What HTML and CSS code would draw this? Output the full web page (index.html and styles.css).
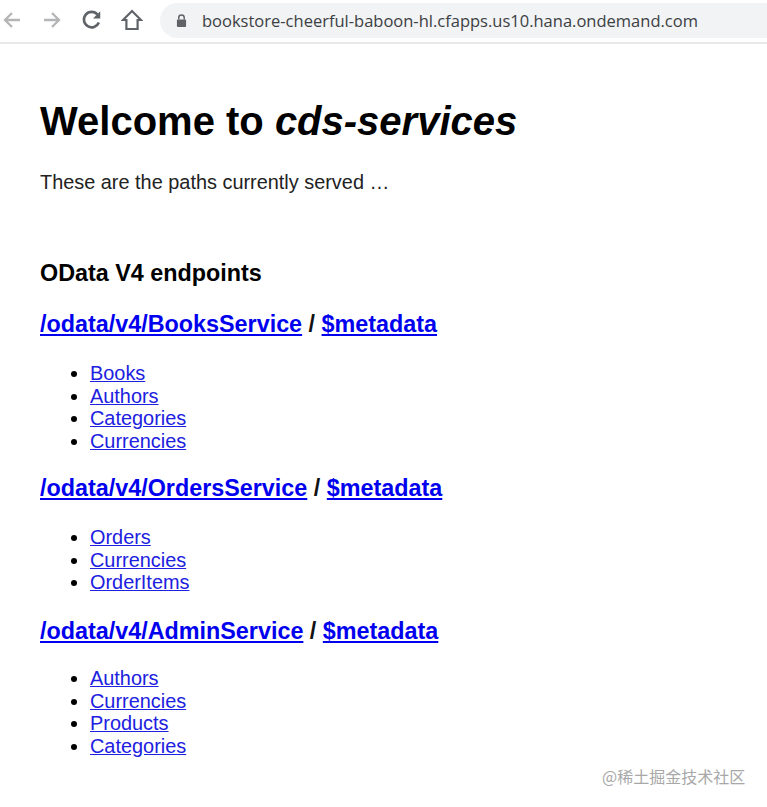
FILE: index.html
```html
<!DOCTYPE html>
<html lang="en">
<head>
<meta charset="utf-8">
<title>Welcome to cds-services</title>
<link rel="stylesheet" href="styles.css">
</head>
<body>
<header class="toolbar">
  <svg class="icon back" viewBox="0 0 20 20"><path d="M18 10H3M10 3l-7 7 7 7"/></svg>
  <svg class="icon forward" viewBox="0 0 20 20"><path d="M2 10h15M10 3l7 7-7 7"/></svg>
  <svg class="icon reload" viewBox="0 0 20 20"><path d="M16.2 12.2A7 7 0 1 1 15 5.1"/><path class="solid" d="M17.5 2v6.6h-6.6z"/></svg>
  <svg class="icon home" viewBox="0 0 22 22"><path d="M11 2 2 11h3.4v9h11.200v-9H20z"/></svg>
  <div class="omnibox">
    <svg class="lock" viewBox="0 0 12 14"><path d="M3 6V4a3 3 0 0 1 6 0v2" class="shackle"/><rect x="1" y="6" width="10" height="8" rx="1"/></svg>
    <span class="url">bookstore-cheerful-baboon-hl.cfapps.us10.hana.ondemand.com</span>
  </div>
</header>
<main class="page">
  <h1>Welcome to <em>cds-services</em></h1>
  <p class="intro">These are the paths currently served …</p>
  <h2>OData V4 endpoints</h2>
  <h3><a href="#">/odata/v4/BooksService</a> / <a href="#">$metadata</a></h3>
  <ul>
    <li><a href="#">Books</a></li>
    <li><a href="#">Authors</a></li>
    <li><a href="#">Categories</a></li>
    <li><a href="#">Currencies</a></li>
  </ul>
  <h3><a href="#">/odata/v4/OrdersService</a> / <a href="#">$metadata</a></h3>
  <ul>
    <li><a href="#">Orders</a></li>
    <li><a href="#">Currencies</a></li>
    <li><a href="#">OrderItems</a></li>
  </ul>
  <h3 class="admin"><a href="#">/odata/v4/AdminService</a> / <a href="#">$metadata</a></h3>
  <ul class="admin-list">
    <li><a href="#">Authors</a></li>
    <li><a href="#">Currencies</a></li>
    <li><a href="#">Products</a></li>
    <li><a href="#">Categories</a></li>
  </ul>
</main>
<div class="watermark">@稀土掘金技术社区</div>
</body>
</html>
```
FILE: styles.css
```css
html, body { margin: 0; padding: 0; background: #fff; }
body {
  position: relative;
  width: 767px;
  height: 807px;
  overflow: hidden;
  font-family: "Liberation Sans", Arial, sans-serif;
  font-size: 19.900px;
  color: #222;
}
.toolbar {
  display: flex;
  align-items: center;
  height: 40px;
  padding-bottom: 2px;
  border-bottom: 2px solid #e8e9eb;
  box-sizing: content-box;
}
.icon { fill: none; stroke-width: 2; flex: none; }
.back { width: 20px; height: 20px; margin-left: 2px; stroke: #b4b5b7; stroke-width: 2.3; }
.forward { width: 20px; height: 20px; margin-left: 20px; stroke: #b4b5b7; stroke-width: 2.3; }
.reload { width: 22px; height: 22px; margin-left: 19px; stroke: #5f6368; stroke-width: 2.4; }
.reload .solid { fill: #5f6368; stroke: none; }
.home { width: 22px; height: 22px; margin-left: 18px; stroke: #5f6368; stroke-width: 2.2; }
.omnibox {
  display: flex;
  align-items: center;
  flex: 1;
  height: 35px;
  margin-left: 17px;
  padding-left: 16px;
  border-radius: 18px 0 0 18px;
  background: #f1f3f4;
}
.lock { width: 11px; height: 13px; fill: #5f6368; margin-right: 15px; }
.lock .shackle { fill: none; stroke: #5f6368; stroke-width: 1.6; }
.url { font-family: "Open Sans", sans-serif; font-size: 16.500px; color: #3c4043; white-space: nowrap; }
.page { padding: 0 40px; }
h1 { margin: 54px 0 0; font-size: 40px; line-height: 46px; font-weight: bold; color: #000; }
.intro { margin: 27px 0 0; line-height: 23px; }
h2 { margin: 66px 0 0; font-size: 23.350px; line-height: 27px; color: #000; }
h3 { margin: 24px 0 0; font-size: 23.350px; line-height: 27px; color: #111; }
ul { margin: 24px 0 0; padding-left: 50px; color: #000; }
li { line-height: 22.500px; }
ul + h3 { margin-top: 23px; }
ul + h3.admin { margin-top: 24px; }
ul.admin-list { margin-top: 22.500px; }
a { color: #0000ee; }
li a { color: #2020e0; }
.watermark {
  position: absolute;
  left: 602px;
  top: 765px;
  font-family: "Noto Sans CJK SC", sans-serif;
  font-size: 16px;
  line-height: 22px;
  color: #a8a8a8;
  white-space: nowrap;
}
```
